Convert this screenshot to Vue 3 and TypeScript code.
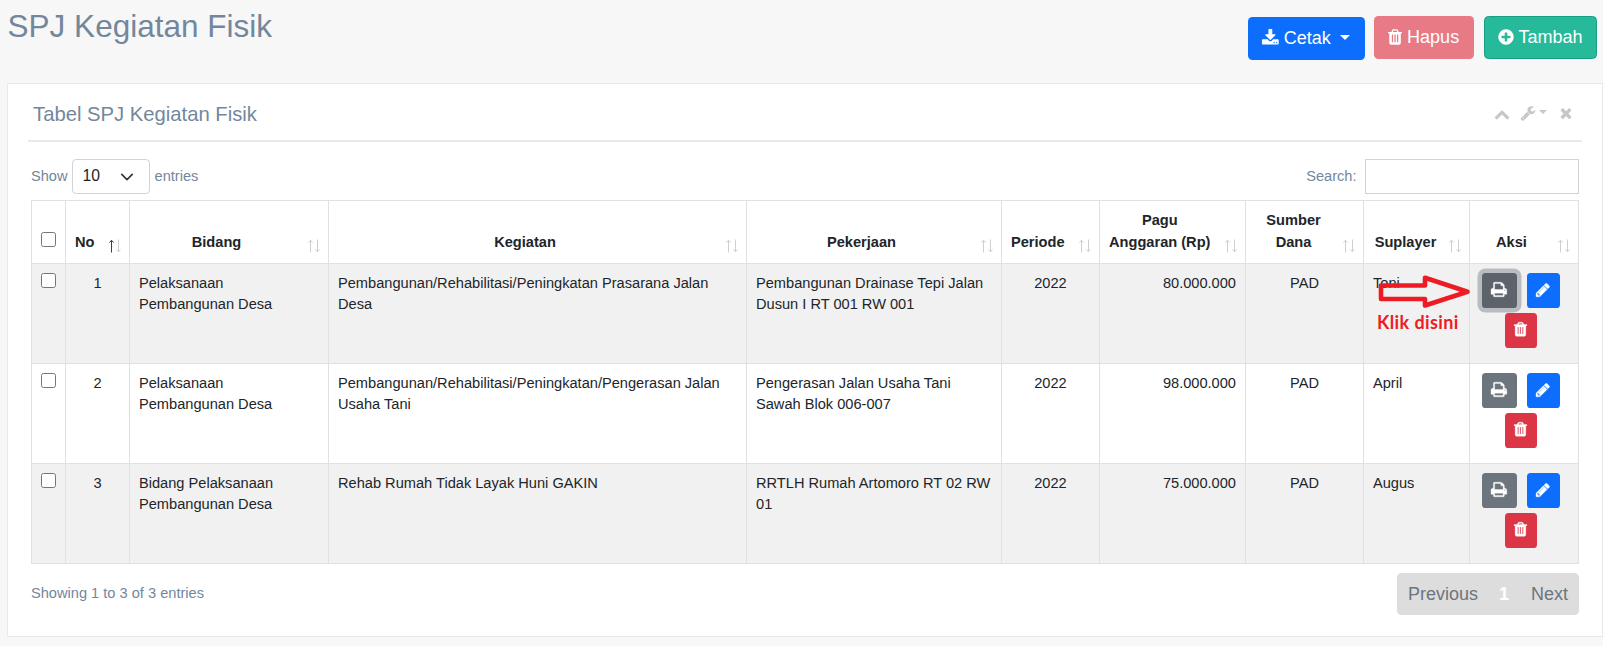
<script setup lang="ts">
interface Icon {
  box: string
  path: string
}

interface Column {
  label: string
  key: string
  lines: string[]
}

interface Row {
  no: number
  bidang: string
  kegiatan: string
  pekerjaan: string
  periode: string
  pagu: string
  sumber: string
  suplayer: string
}

const icons: Record<string, Icon> = {
  download: {
    box: '64 0 1664 1792',
    path: 'M1344 1344q0-26-19-45t-45-19-45 19-19 45 19 45 45 19 45-19 19-45zm256 0q0-26-19-45t-45-19-45 19-19 45 19 45 45 19 45-19 19-45zm128-224v320q0 40-28 68t-68 28h-1472q-40 0-68-28t-28-68v-320q0-40 28-68t68-28h465l135 136q58 56 136 56t136-56l136-136h464q40 0 68 28t28 68zm-325-569q17 41-14 70l-448 448q-18 19-45 19t-45-19l-448-448q-31-29-14-70 17-39 59-39h256v-448q0-26 19-45t45-19h256q26 0 45 19t19 45v448h256q42 0 59 39z',
  },
  trash: {
    box: '192 0 1408 1792',
    path: 'M704 1376v-704q0-14-9-23t-23-9h-64q-14 0-23 9t-9 23v704q0 14 9 23t23 9h64q14 0 23-9t9-23zm256 0v-704q0-14-9-23t-23-9h-64q-14 0-23 9t-9 23v704q0 14 9 23t23 9h64q14 0 23-9t9-23zm256 0v-704q0-14-9-23t-23-9h-64q-14 0-23 9t-9 23v704q0 14 9 23t23 9h64q14 0 23-9t9-23zm-544-992h448l-48-117q-7-9-17-11h-317q-10 2-17 11zm928 32v64q0 14-9 23t-23 9h-96v948q0 83-47 143.500t-113 60.500h-832q-66 0-113-58.500t-47-141.500v-952h-96q-14 0-23-9t-9-23v-64q0-14 9-23t23-9h309l70-167q15-37 54-63t79-26h320q40 0 79 26t54 63l70 167h309q14 0 23 9t9 23z',
  },
  plus: {
    box: '128 0 1536 1792',
    path: 'M1344 960v-128q0-26-19-45t-45-19h-256v-256q0-26-19-45t-45-19h-128q-26 0-45 19t-19 45v256h-256q-26 0-45 19t-19 45v128q0 26 19 45t45 19h256v256q0 26 19 45t45 19h128q26 0 45-19t19-45v-256h256q26 0 45-19t19-45zm320-64q0 209-103 385.500t-279.500 279.500-385.500 103-385.500-103-279.500-279.500-103-385.500 103-385.500 279.500-279.500 385.500-103 385.500 103 279.500 279.500 103 385.500z',
  },
  chevron: {
    box: '0 0 1792 1792',
    path: 'M1683 1331l-166 165q-19 19-45 19t-45-19l-531-531-531 531q-19 19-45 19t-45-19l-166-165q-19-19-19-45.500t19-45.500l742-741q19-19 45-19t45 19l742 741q19 19 19 45.500t-19 45.500z',
  },
  wrench: {
    box: '64 0 1664 1792',
    path: 'M448 1472q0-26-19-45t-45-19-45 19-19 45 19 45 45 19 45-19 19-45zm644-420l-682 682q-37 37-90 37-52 0-91-37l-106-108q-38-36-38-90 0-53 38-91l681-681q39 98 114.500 173.500t173.500 114.500zm634-435q0 39-23 106-47 134-164.500 217.500t-258.500 83.500q-185 0-316.500-131.500t-131.500-316.500 131.500-316.500 316.500-131.500q58 0 121.500 16.500t107.500 46.500q16 11 16 28t-16 28l-293 169v224l193 107q5-3 79-48.500t135.500-81 70.500-35.500q15 0 23.500 10t8.500 25z',
  },
  times: {
    box: '192 0 1408 1792',
    path: 'M1490 1322q0 40-28 68l-136 136q-28 28-68 28t-68-28l-294-294-294 294q-28 28-68 28t-68-28l-136-136q-28-28-28-68t28-68l294-294-294-294q-28-28-28-68t28-68l136-136q28-28 68-28t68 28l294 294 294-294q28-28 68-28t68 28l136 136q28 28 28 68t-28 68l-294 294 294 294q28 28 28 68z',
  },
  print: {
    box: '64 0 1664 1792',
    path: 'M448 1536h896v-256h-896v256zm0-640h896v-384h-160q-40 0-68-28t-28-68v-160h-640v640zm1152 64q0-26-19-45t-45-19-45 19-19 45 19 45 45 19 45-19 19-45zm128 0v416q0 13-9.500 22.500t-22.500 9.500h-224v160q0 40-28 68t-68 28h-960q-40 0-68-28t-28-68v-160h-224q-13 0-22.500-9.500t-9.500-22.500v-416q0-79 56.500-135.500t135.500-56.500h64v-544q0-40 28-68t68-28h672q40 0 88 20t76 48l152 152q28 28 48 76t20 88v256h64q79 0 135.500 56.500t56.500 135.500z',
  },
  pencil: {
    box: '128 0 1536 1792',
    path: 'M491 1536l91-91-235-235-91 91v107h128v128h107zm523-928q0-22-22-22-10 0-17 7l-542 542q-7 7-7 17 0 22 22 22 10 0 17-7l542-542q7-7 7-17zm-54-192l416 416-832 832h-416v-416zm683 96q0 53-37 90l-166 166-416-416 166-165q36-38 90-38 53 0 91 38l235 234q37 39 37 91z',
  },
}

const columns: Column[] = [
  { label: 'No', key: 'no', lines: ['No'] },
  { label: 'Bidang', key: 'bidang', lines: ['Bidang'] },
  { label: 'Kegiatan', key: 'kegiatan', lines: ['Kegiatan'] },
  { label: 'Pekerjaan', key: 'pekerjaan', lines: ['Pekerjaan'] },
  { label: 'Periode', key: 'periode', lines: ['Periode'] },
  { label: 'Pagu Anggaran (Rp)', key: 'pagu', lines: ['Pagu', 'Anggaran (Rp)'] },
  { label: 'Sumber Dana', key: 'sumber', lines: ['Sumber', 'Dana'] },
  { label: 'Suplayer', key: 'suplayer', lines: ['Suplayer'] },
  { label: 'Aksi', key: 'aksi', lines: ['Aksi'] },
]

const rows: Row[] = [
  {
    no: 1,
    bidang: 'Pelaksanaan Pembangunan Desa',
    kegiatan: 'Pembangunan/Rehabilitasi/Peningkatan Prasarana Jalan Desa',
    pekerjaan: 'Pembangunan Drainase Tepi Jalan Dusun I RT 001 RW 001',
    periode: '2022',
    pagu: '80.000.000',
    sumber: 'PAD',
    suplayer: 'Toni',
  },
  {
    no: 2,
    bidang: 'Pelaksanaan Pembangunan Desa',
    kegiatan: 'Pembangunan/Rehabilitasi/Peningkatan/Pengerasan Jalan Usaha Tani',
    pekerjaan: 'Pengerasan Jalan Usaha Tani Sawah Blok 006-007',
    periode: '2022',
    pagu: '98.000.000',
    sumber: 'PAD',
    suplayer: 'April',
  },
  {
    no: 3,
    bidang: 'Bidang Pelaksanaan Pembangunan Desa',
    kegiatan: 'Rehab Rumah Tidak Layak Huni GAKIN',
    pekerjaan: 'RRTLH Rumah Artomoro RT 02 RW 01',
    periode: '2022',
    pagu: '75.000.000',
    sumber: 'PAD',
    suplayer: 'Augus',
  },
]
</script>

<template>
  <main class="page">
    <header class="top">
      <h3>SPJ Kegiatan Fisik</h3>
      <div class="tools">
        <button class="btn blue cetak">
          <svg class="icon w-wide" :viewBox="icons.download.box"><path :d="icons.download.path" /></svg>
          <span>Cetak</span>
          <i class="caret"></i>
        </button>
        <button class="btn hapus">
          <svg class="icon w-slim" :viewBox="icons.trash.box"><path :d="icons.trash.path" /></svg>
          <span>Hapus</span>
        </button>
        <button class="btn tambah">
          <svg class="icon w-mid" :viewBox="icons.plus.box"><path :d="icons.plus.path" /></svg>
          <span>Tambah</span>
        </button>
      </div>
    </header>

    <section class="panel">
      <div class="title">
        <h2>Tabel SPJ Kegiatan Fisik</h2>
        <div class="toolbox">
          <svg class="chev" :viewBox="icons.chevron.box"><path :d="icons.chevron.path" /></svg>
          <span class="wrench">
            <svg :viewBox="icons.wrench.box"><path :d="icons.wrench.path" /></svg>
            <i class="caret small"></i>
          </span>
          <svg class="close" :viewBox="icons.times.box"><path :d="icons.times.path" /></svg>
        </div>
      </div>

      <div class="filters">
        <div class="length">
          <span class="label">Show</span>
          <div class="select">
            <span>10</span>
            <svg viewBox="0 0 16 16"><path d="m2 5 6 6 6-6" /></svg>
          </div>
          <span class="label">entries</span>
        </div>
        <label class="search">
          <span class="label">Search:</span>
          <input type="text" />
        </label>
      </div>

      <table>
        <colgroup>
          <col class="c-check" />
          <col v-for="c in columns" :key="c.key" :class="'c-' + c.key" />
        </colgroup>
        <thead>
          <tr>
            <th class="check"><input type="checkbox" /></th>
            <th v-for="c in columns" :key="c.key" :class="'h-' + c.key" :aria-label="c.label">
              <div v-for="line in c.lines" :key="line">{{ line }}</div>
              <svg class="sort" :class="{ asc: c.key === 'no' }" viewBox="0 0 13 14">
                <path class="up" d="M3.500 13.500V1.500M1.500 3.500 3.500 1.200 5.500 3.500" />
                <path class="down" d="M10.500 .5v12M8.500 10.500 10.500 12.800 12.500 10.500" />
              </svg>
            </th>
          </tr>
        </thead>
        <tbody>
          <tr v-for="row in rows" :key="row.no">
            <td class="check"><input type="checkbox" /></td>
            <td class="center">{{ row.no }}</td>
            <td>{{ row.bidang }}</td>
            <td>{{ row.kegiatan }}</td>
            <td>{{ row.pekerjaan }}</td>
            <td class="center">{{ row.periode }}</td>
            <td class="right">{{ row.pagu }}</td>
            <td class="center">{{ row.sumber }}</td>
            <td class="suplayer">
              {{ row.suplayer }}
              <div v-if="row.no === 1" class="hint">
                <svg viewBox="0 0 96 36">
                  <path d="M4 12.500H48V4.800L90.500 18.700 48 32.500V26H4Z" />
                </svg>
                <b>Klik disini</b>
              </div>
            </td>
            <td class="aksi">
              <div class="actions">
                <button class="act print" :class="{ focused: row.no === 1 }">
                  <svg :viewBox="icons.print.box"><path :d="icons.print.path" /></svg>
                </button>
                <button class="act edit">
                  <svg :viewBox="icons.pencil.box"><path :d="icons.pencil.path" /></svg>
                </button>
                <button class="act del">
                  <svg :viewBox="icons.trash.box"><path :d="icons.trash.path" /></svg>
                </button>
              </div>
            </td>
          </tr>
        </tbody>
      </table>

      <footer class="foot">
        <span class="info">Showing 1 to 3 of 3 entries</span>
        <nav class="pager">
          <span>Previous</span>
          <b>1</b>
          <span>Next</span>
        </nav>
      </footer>
    </section>
  </main>
</template>

<style>
body {
  margin: 0;
  background: #f7f7f7;
}
</style>

<style scoped>
.page {
  box-sizing: border-box;
  width: 1603px;
  height: 646px;
  padding-left: 7px;
  overflow: hidden;
  background: #f7f7f7;
  color: #73879c;
  font: 14.625px/21.5px "Liberation Sans", Arial, sans-serif;
}

svg {
  display: block;
  fill: currentColor;
}

h2,
h3 {
  margin: 0;
  font-weight: 400;
}

.top {
  display: flex;
  justify-content: space-between;
  height: 83px;
  padding-right: 6px;
}

h3 {
  margin-top: 7px;
  padding-left: 0.6px;
  font-size: 31.5px;
  line-height: 38px;
}

.tools {
  display: flex;
  align-items: flex-start;
  padding-top: 16px;
}

.btn {
  box-sizing: border-box;
  display: flex;
  align-items: center;
  height: 43px;
  padding: 0 0 1px 14px;
  border: 0;
  border-radius: 4.5px;
  color: #fff;
  font: 18px/27px "Liberation Sans", Arial, sans-serif;
}

.icon {
  height: 18px;
  margin: 0 5px 1px 0;
}

.w-wide {
  width: 16.7px;
}

.w-mid {
  width: 16px;
}

.w-slim {
  width: 14.1px;
}

.cetak {
  width: 117px;
  margin-top: 1px;
  margin-right: 9px;
  background: #0d6efd;
}

.hapus {
  width: 100px;
  margin-right: 10px;
  background: #e77a84;
}

.tambah {
  width: 113px;
  padding-left: 13px;
  border: 1px solid #169f85;
  background: #26b99a;
}

.tambah .icon {
  margin-right: 4.4px;
}

.caret {
  margin: 0 0 2px 9.5px;
  border-top: 5.4px solid;
  border-right: 5.4px solid transparent;
  border-left: 5.4px solid transparent;
}

.panel {
  box-sizing: border-box;
  width: 1596px;
  height: 554px;
  padding: 0 20px;
  border: 1px solid #e6e9ed;
  background: #fff;
}

.title {
  display: flex;
  justify-content: space-between;
  box-sizing: border-box;
  height: 58px;
  padding: 18px 9.5px 0 5px;
  border-bottom: 2px solid #e6e9ed;
}

h2 {
  font-size: 20.25px;
  line-height: 24px;
}

.toolbox {
  display: flex;
  align-items: flex-start;
  padding-top: 3px;
  color: #c5c7cb;
}

.chev {
  width: 16px;
  height: 16px;
  margin: 1px 10px 0 0;
}

.wrench {
  display: flex;
  margin-right: 11.500px;
}

.wrench svg {
  width: 16px;
  height: 16px;
}

.caret.small {
  height: 0;
  margin: 5px 0 0 3px;
  border-width: 4.4px 4.4px 0;
}

.close {
  width: 14px;
  height: 16px;
}

.filters {
  display: flex;
  justify-content: space-between;
  margin: 17px 3px 6px;
}

.length,
.search {
  display: flex;
  align-items: center;
}

.label {
  padding-top: 1px;
}

.select {
  box-sizing: border-box;
  display: flex;
  align-items: center;
  justify-content: space-between;
  width: 78px;
  height: 35px;
  margin: 0 5px 0 4px;
  padding: 0 15px 2px 10px;
  border: 1px solid #ced4da;
  border-radius: 4px;
  color: #212529;
  font-size: 15.75px;
}

.select svg {
  width: 14px;
  height: 14px;
  margin-top: 3px;
  fill: none;
  stroke: #343a40;
  stroke-width: 2;
  stroke-linecap: round;
  stroke-linejoin: round;
}

.search input {
  box-sizing: border-box;
  width: 214px;
  height: 35px;
  margin: 0 0 0 8.500px;
  border: 1px solid #ced4da;
  background: #fff;
}

table {
  width: 1548px;
  margin-left: 3px;
  border-top: 1px solid #dee2e6;
  border-left: 1px solid #dee2e6;
  border-collapse: separate;
  border-spacing: 0;
  table-layout: fixed;
  color: #212529;
}

.c-check { width: 34px; }
.c-no { width: 64px; }
.c-bidang { width: 199px; }
.c-kegiatan { width: 418px; }
.c-pekerjaan { width: 255px; }
.c-periode { width: 98px; }
.c-pagu { width: 146px; }
.c-sumber { width: 118px; }
.c-suplayer { width: 106px; }
.c-aksi { width: 109px; }

th,
td {
  position: relative;
  box-sizing: border-box;
  padding: 9px;
  border-right: 1px solid #dee2e6;
  border-bottom: 1px solid #dee2e6;
}

th {
  height: 63px;
  padding: 7px 34px 10px 9px;
  line-height: 22px;
  vertical-align: bottom;
  text-align: center;
  white-space: nowrap;
}

.h-no,
.h-periode,
.h-pagu {
  padding-right: 34px;
  padding-left: 8.500px;
}

.h-sumber,
.h-suplayer {
  padding-right: 31px;
}

td {
  height: 100px;
  line-height: 21px;
  vertical-align: top;
}

tbody tr:nth-child(odd) td {
  background: #f1f1f1;
}

th.check,
td.check {
  padding: 9px 0 0 9px;
  text-align: left;
}

th.check {
  padding-bottom: 16px;
}

.check input {
  display: block;
  width: 15px;
  height: 15px;
  margin: 0;
}

.sort {
  position: absolute;
  right: 8px;
  bottom: 10px;
  width: 13px;
  height: 14px;
  fill: none;
  stroke: #cfcfd2;
  stroke-width: 1;
}

.sort.asc .up {
  stroke: #55304a;
}

.center {
  text-align: center;
}

.right {
  text-align: right;
}

.hint {
  position: absolute;
  top: 9px;
  left: 13px;
  z-index: 2;
  color: #ed1c24;
}

.hint svg {
  width: 96px;
  height: 36px;
  fill: none;
  stroke: #ed1c24;
  stroke-width: 4.6;
  stroke-linejoin: round;
}

.hint b {
  display: block;
  margin-top: 2px;
  font: 700 18px/22px Lato, "Liberation Sans", sans-serif;
  letter-spacing: 0.4px;
  white-space: nowrap;
}

td.aksi {
  padding: 9px 0 0;
}

.actions {
  display: flex;
  flex-wrap: wrap;
  justify-content: center;
  gap: 5px 10px;
  padding-right: 7px;
}

.act {
  box-sizing: border-box;
  display: flex;
  align-items: center;
  justify-content: center;
  height: 35px;
  padding: 0 0 2px;
  border: 0;
  border-radius: 3.6px;
  color: #fff;
}

.act svg {
  height: 17px;
  overflow: visible;
  stroke: currentColor;
  stroke-width: 36;
}

.print {
  width: 35px;
  background: #6c757d;
}

.print.focused {
  background: #5c636a;
  box-shadow: 0 0 0 4.5px rgba(130, 138, 145, 0.5);
}

.edit {
  width: 33px;
  background: #0d6efd;
}

.edit svg {
  height: 16px;
}

.del {
  width: 32px;
  background: #dc3545;
}

.del svg {
  height: 16.500px;
}

.foot {
  display: flex;
  align-items: flex-start;
  justify-content: space-between;
  padding: 9px 3px 0;
}

.info {
  margin-top: 10px;
}

.pager {
  box-sizing: border-box;
  display: flex;
  align-items: center;
  width: 182px;
  height: 42px;
  padding: 1px 0 0 11px;
  border-radius: 4.5px;
  background: #ddd;
  color: #6c757d;
  font-size: 18px;
}

.pager b {
  margin: 0 22px 0 21px;
  color: #fff;
}
</style>
